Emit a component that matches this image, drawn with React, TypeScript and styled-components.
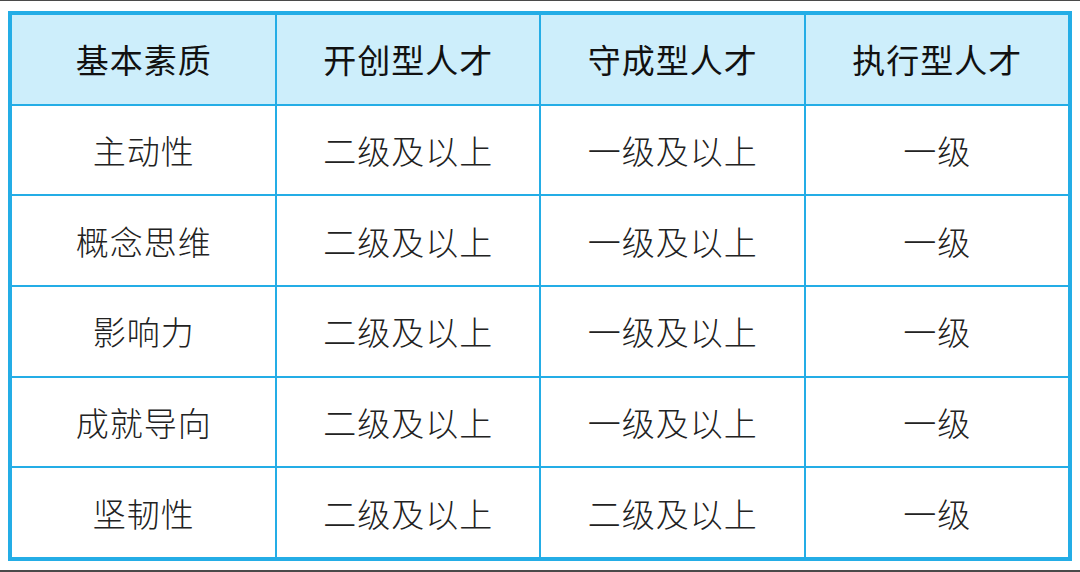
import styled, { createGlobalStyle } from "styled-components";

const GlobalStyle = createGlobalStyle`
  html, body {
    margin: 0;
    padding: 0;
    background: #ffffff;
  }
  body {
    font-family: "Noto Sans CJK SC", "Noto Sans", sans-serif;
  }
`;

const Page = styled.div`
  width: 1080px;
  height: 572px;
  display: flex;
  flex-direction: column;
  background: #ffffff;
  overflow: hidden;
`;

const Rule = styled.div<{ $h: number }>`
  height: ${(p) => p.$h}px;
  background: #4a4a4a;
  flex: none;
`;

const Table = styled.div`
  margin: 10px 8px 0 8px;
  height: 550px;
  box-sizing: border-box;
  border: 4px solid #24ade6;
  background: #24ade6;
  display: grid;
  grid-template-columns: repeat(4, 1fr);
  grid-template-rows: repeat(6, 1fr);
  gap: 2px;
`;

const Cell = styled.div<{ $head?: boolean }>`
  display: flex;
  align-items: center;
  justify-content: center;
  background: ${(p) => (p.$head ? "#cdeefb" : "#ffffff")};
  color: ${(p) => (p.$head ? "#111111" : "#222222")};
  font-size: 33px;
  font-weight: ${(p) => (p.$head ? 400 : 300)};
  letter-spacing: 1px;
  padding-left: 1px;
`;

const Spacer = styled.div`
  flex: 1;
`;

const head = ["基本素质", "开创型人才", "守成型人才", "执行型人才"];

const rows = [
  ["主动性", "二级及以上", "一级及以上", "一级"],
  ["概念思维", "二级及以上", "一级及以上", "一级"],
  ["影响力", "二级及以上", "一级及以上", "一级"],
  ["成就导向", "二级及以上", "一级及以上", "一级"],
  ["坚韧性", "二级及以上", "二级及以上", "一级"],
];

export default function App() {
  return (
    <>
      <GlobalStyle />
      <Page>
        <Rule $h={1} />
        <Table>
          {head.map((h) => (
            <Cell key={h} $head>
              {h}
            </Cell>
          ))}
          {rows.map((r, i) =>
            r.map((c, j) => <Cell key={`${i}-${j}`}>{c}</Cell>)
          )}
        </Table>
        <Spacer />
        <Rule $h={2} />
      </Page>
    </>
  );
}
